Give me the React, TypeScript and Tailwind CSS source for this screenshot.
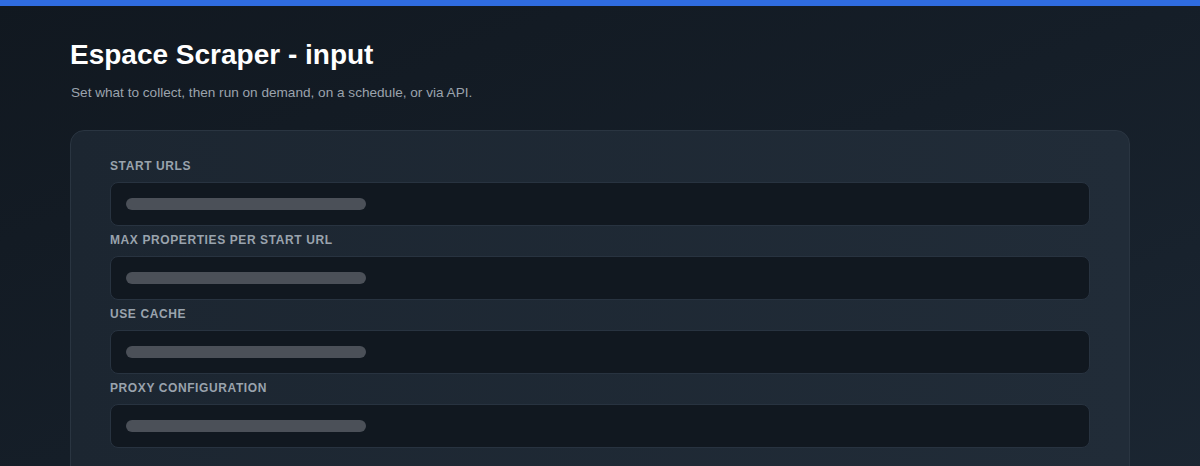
const fields = [
  "Start URLs",
  "Max properties per start URL",
  "Use cache",
  "Proxy configuration",
];

const Field = ({ label }: { label: string }) => {
  return (
    <div>
      <label className="block text-[12px] leading-4 font-bold uppercase tracking-[0.05em] text-[#9aa3ad] mb-2">
        {label}
      </label>
      <div className="h-11 rounded-lg border border-[#283340] bg-[#111820] pl-[15px] flex items-center">
        <div className="h-3 w-[240px] rounded-full bg-[#4b5058]"></div>
      </div>
    </div>
  );
};

export default function App() {
  return (
    <div className="min-h-[466px] bg-linear-to-br from-[#111820] via-[#151e28] to-[#1b2632] font-['Liberation_Sans',Arial,sans-serif] overflow-hidden">
      <div className="h-1.5 bg-[#2f6ce0]"></div>
      <div className="max-w-[1060px] mx-auto pt-8">
        <h1 className="text-[28px] leading-[34px] font-bold text-white">
          Espace Scraper - input
        </h1>
        <p className="mt-[11px] text-[13.6px] leading-5 text-[#9ba3ad] pl-px">
          Set what to collect, then run on demand, on a schedule, or via API.
        </p>
        <div className="mt-[27px] rounded-[14px] border border-[#2a3541] bg-linear-to-r from-[#1c2631] to-[#212c38] px-[39px] pt-[27px] pb-10">
          <div className="space-y-1.5">
            {fields.map((f) => (
              <Field key={f} label={f} />
            ))}
          </div>
        </div>
      </div>
    </div>
  );
}
